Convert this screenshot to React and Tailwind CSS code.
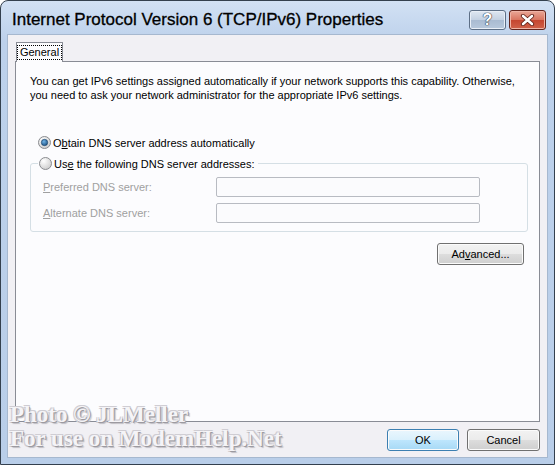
import React from 'react'

const ui = "font-['Liberation_Sans',Arial,sans-serif] text-[11px] leading-[14px]"

function Radio({ checked }) {
  return (
    <svg width="13" height="13" viewBox="0 0 13 13" className="shrink-0">
      <defs>
        <radialGradient id={checked ? 'rc' : 'ru'} cx="0.35" cy="0.3" r="0.8">
          <stop offset="0" stopColor="#ffffff" />
          <stop offset="1" stopColor="#c9c9c9" />
        </radialGradient>
        <radialGradient id="dot" cx="0.4" cy="0.35" r="0.7">
          <stop offset="0" stopColor="#6fb3e6" />
          <stop offset="1" stopColor="#1b4f82" />
        </radialGradient>
      </defs>
      <circle cx="6.5" cy="6.5" r="6" fill={`url(#${checked ? 'rc' : 'ru'})`} stroke="#8a8c90" strokeWidth="1" />
      {checked && <circle cx="6.5" cy="6.5" r="3.2" fill="url(#dot)" stroke="#1a3f66" strokeWidth="0.6" />}
    </svg>
  )
}

function Button({ children, primary, className = '' }) {
  return (
    <div
      className={`${ui} h-[22px] flex items-center justify-center rounded-[3px] border text-black shadow-[inset_0_0_0_1px_#fbfbfb] ${
        primary
          ? 'border-[#3c7fb1] bg-[linear-gradient(#eaf6fd_0%,#d9f0fc_50%,#bee6fd_50%,#a7d9f5_100%)]'
          : 'border-[#707070] bg-[linear-gradient(#f2f2f2_0%,#ebebeb_50%,#dddddd_50%,#cfcfcf_100%)]'
      } ${className}`}
    >
      {children}
    </div>
  )
}

export default function App() {
  return (
    <div className="w-[555px] h-[465px] bg-white overflow-hidden relative">
      <div className="h-full flex flex-col rounded-t-[8px] border border-[#34404e] bg-[linear-gradient(#d2e1f4,#bdd1eb_40px,#b9cee9)]">
        {/* Title bar */}
        <div className="h-[33px] shrink-0 flex items-start pl-[11px] pr-[8px]">
          <span className="flex-1 pt-[9px] font-['Liberation_Sans',Arial,sans-serif] text-[17px] leading-[20px] text-black [-webkit-text-stroke:0.3px_#000]">
            Internet Protocol Version 6 (TCP/IPv6) Properties
          </span>
          <div className="flex gap-[3px] mt-[9px]">
            <div className="w-[37px] h-[20px] rounded-[3px] border border-[#5d6f86] bg-[linear-gradient(#dfe7f1_0%,#c3d1e2_50%,#a9bbd1_50%,#b7c8dc_100%)] shadow-[inset_0_0_0_1px_#e9eff7] flex items-center justify-center">
              <span className="font-['Liberation_Sans',Arial,sans-serif] font-bold text-[16px] leading-none text-white [text-shadow:0_0_1px_#2d3c50,0_0_1px_#2d3c50,0_0_1px_#2d3c50]">?</span>
            </div>
            <div className="w-[37px] h-[20px] rounded-[3px] border border-[#62241c] bg-[linear-gradient(#eaa797_0%,#d8745f_50%,#c4452f_50%,#d0624a_100%)] shadow-[inset_0_0_0_1px_#eeb4a6] flex items-center justify-center">
              <svg width="15" height="12" viewBox="0 0 15 12">
                <path d="M3 2 L12 10 M12 2 L3 10" stroke="#5a1d14" strokeWidth="4.2" strokeLinecap="round" />
                <path d="M3 2 L12 10 M12 2 L3 10" stroke="#ffffff" strokeWidth="2.6" strokeLinecap="round" />
              </svg>
            </div>
          </div>
        </div>

        {/* Client area */}
        <div className="flex-1 mx-[6px] mb-[6px] border border-[#a6b8cf] bg-[#f1f0f4] flex flex-col pl-[7px] pr-[7px] pt-[7px] pb-[6px]">
          {/* Tab */}
          <div className="flex">
            <div className={`${ui} ml-[1px] -mb-[1px] relative z-10 w-[47px] h-[20px] border border-b-0 border-[#898c95] bg-[#fcfcfe] flex items-center justify-center`}>
              <span className="border border-dotted border-black px-[2px] leading-[13px] text-black">General</span>
            </div>
          </div>

          {/* Panel */}
          <div className={`${ui} flex-1 border border-[#898c95] bg-[#fcfcfe] pl-[14px] pt-[12px] text-black`}>
            <p>
              You can get IPv6 settings assigned automatically if your network supports this capability. Otherwise,
              <br />
              you need to ask your network administrator for the appropriate IPv6 settings.
            </p>

            <div className="mt-[33px] ml-[8px] h-[15px] flex items-center gap-[2px]">
              <Radio checked />
              <span>O<span className="underline">b</span>tain DNS server address automatically</span>
            </div>

            <fieldset className="mt-[6px] w-[498px] border border-[#d5dfe5] rounded-[3px] pb-[8px]">
              <legend className="ml-[7px] px-[1px] h-[15px] flex items-center gap-[2px] bg-[#fcfcfe]">
                <Radio />
                <span className="pr-[2px]">Us<span className="underline">e</span> the following DNS server addresses:</span>
              </legend>
              <div className="flex flex-col gap-[6px] mt-[6px]">
                <div className="flex items-center h-[20px]">
                  <span className="w-[185px] pl-[12px] text-[#a0a0a0]"><span className="underline">P</span>referred DNS server:</span>
                  <div className="w-[264px] h-[20px] rounded-[2px] border border-[#b8bbc2] bg-[#fbfbfd]" />
                </div>
                <div className="flex items-center h-[20px]">
                  <span className="w-[185px] pl-[12px] text-[#a0a0a0]"><span className="underline">A</span>lternate DNS server:</span>
                  <div className="w-[264px] h-[20px] rounded-[2px] border border-[#b8bbc2] bg-[#fbfbfd]" />
                </div>
              </div>
            </fieldset>

            <div className="mt-[11px] flex justify-end pr-[15px]">
              <Button className="w-[87px]">Ad<span className="underline">v</span>anced...</Button>
            </div>
          </div>

          {/* Footer buttons */}
          <div className="mt-[7px] flex justify-end gap-[8px]">
            <Button primary className="w-[72px]">OK</Button>
            <Button className="w-[73px]">Cancel</Button>
          </div>
        </div>
      </div>

      {/* Watermark */}
      <div className="absolute left-[10px] top-[403px] font-['Liberation_Serif','Times_New_Roman',serif] font-bold text-[23px] leading-[24px] text-[#f5f4f7] [text-shadow:1px_1px_0_#9c9aa0,-1px_-1px_0_#cfcdd3,1px_-1px_0_#cfcdd3,-1px_1px_0_#cfcdd3,2px_2px_1px_#bfbdc3] pointer-events-none">
        <div>Photo © JLMeller</div>
        <div>For use on ModemHelp.Net</div>
      </div>
    </div>
  )
}
